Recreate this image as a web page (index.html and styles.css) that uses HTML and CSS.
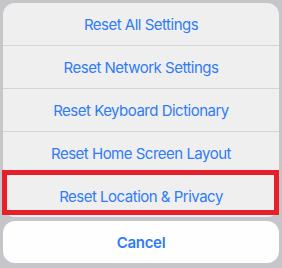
FILE: index.html
```html
<!DOCTYPE html>
<html>
<head>
<meta charset="utf-8">
<link rel="stylesheet" href="styles.css">
</head>
<body>
<div class="screen">
  <div class="sheet">
    <div class="row">Reset All Settings</div>
    <div class="row">Reset Network Settings</div>
    <div class="row">Reset Keyboard Dictionary</div>
    <div class="row">Reset Home Screen Layout</div>
    <div class="row highlighted">Reset Location &amp; Privacy<span class="mark"></span></div>
  </div>
  <div class="cancel">Cancel</div>
</div>
</body>
</html>
```
FILE: styles.css
```css
html, body {
  margin: 0;
  padding: 0;
  background: #c6c6ca;
}
.screen {
  width: 282px;
  height: 268px;
  box-sizing: border-box;
  padding: 3px 3px 0 3px;
  display: flex;
  flex-direction: column;
  gap: 4px;
  font-family: Inter, "Noto Sans", sans-serif;
}
.sheet {
  display: flex;
  flex-direction: column;
  gap: 1px;
  background: #d5d5d9;
  border-radius: 12px;
}
.row {
  height: 42px;
  display: flex;
  align-items: center;
  justify-content: center;
  background: #efeff0;
  color: #2f7cf6;
  font-size: 15px;
  letter-spacing: -0.5px;
  padding-top: 1px;
  box-sizing: border-box;
}
.row:first-child {
  border-radius: 12px 12px 0 0;
}
.row:last-child {
  border-radius: 0 0 12px 12px;
}
.highlighted {
  position: relative;
}
.mark {
  position: absolute;
  top: -5px;
  left: -1px;
  right: 0;
  bottom: 2px;
  border: 5px solid #e81e2b;
  box-sizing: border-box;
}
.cancel {
  height: 42px;
  display: flex;
  align-items: center;
  justify-content: center;
  background: #fefefe;
  border-radius: 12px;
  color: #2f7cf6;
  font-size: 15px;
  font-weight: 600;
  letter-spacing: -0.3px;
}
```
